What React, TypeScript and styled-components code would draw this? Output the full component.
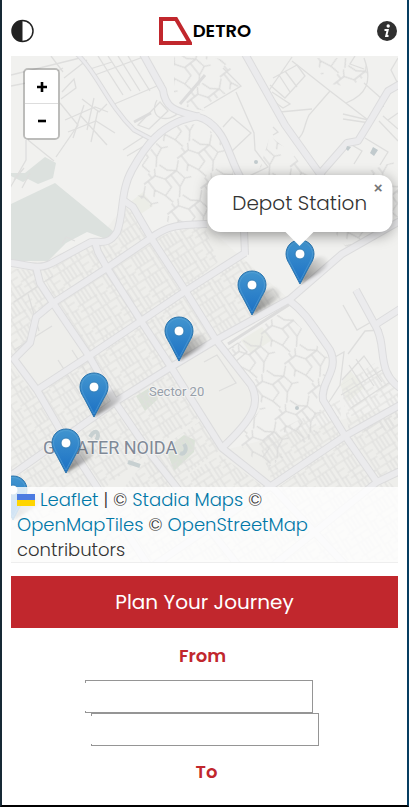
import React from "react";
import styled, { createGlobalStyle } from "styled-components";

const GlobalStyle = createGlobalStyle`
  *, *::before, *::after { box-sizing: border-box; }
  body {
    margin: 0;
    background: #fff;
    color: #333;
    font-family: Poppins, Inter, "Open Sans", sans-serif;
    font-size: 18px;
  }
`;

const Page = styled.div`
  min-height: 100vh;
  display: flex;
  flex-direction: column;
  padding: 0 9px;
  border: 2px solid #000;
  border-top: 0;
  border-left-color: #172935;
  border-right-color: #073e61;
`;

const Header = styled.header`
  display: flex;
  align-items: center;
  justify-content: space-between;
  height: 56px;
  padding-top: 6px;
`;

const IconButton = styled.button`
  display: flex;
  padding: 0;
  border: 0;
  background: none;
  cursor: pointer;
`;

const Brand = styled.a`
  display: flex;
  align-items: center;
  gap: 1px;
  color: #000;
  font-size: 18px;
  font-weight: 600;
  line-height: 28px;
  text-decoration: none;
`;

const MapArea = styled.section`
  position: relative;
  display: flex;
  flex-direction: column;
  justify-content: space-between;
  align-items: flex-start;
  height: calc(100vh - 300px);
  min-height: 360px;
  overflow: hidden;
  background: #f1f1ef;
`;

const Tiles = styled.svg`
  position: absolute;
  inset: 0;
  width: 100%;
  height: 100%;
  font-family: Roboto, sans-serif;
`;

const ZoomControl = styled.div`
  position: relative;
  display: flex;
  flex-direction: column;
  width: 37px;
  margin: 12px;
  border: 2px solid rgba(0, 0, 0, 0.22);
  border-radius: 5px;
  background-clip: padding-box;
`;

const ZoomButton = styled.button`
  display: flex;
  align-items: center;
  justify-content: center;
  height: 34px;
  padding: 0;
  border: 0;
  background: #fff;
  color: #000;
  cursor: pointer;
  &:first-child {
    border-bottom: 1px solid #ddd;
    border-radius: 3px 3px 0 0;
  }
  &:last-child { border-radius: 0 0 3px 3px; }
`;

const Pin = styled.button`
  position: absolute;
  width: 50px;
  height: 46px;
  margin: -45px 0 0 -15px;
  padding: 0;
  border: 0;
  background: none;
  cursor: pointer;
`;

const Popup = styled.div`
  position: absolute;
  left: 74.6%;
  top: 34.8%;
  width: 185px;
  height: 57px;
  padding-bottom: 2px;
  transform: translate(-50%, -100%);
  display: flex;
  align-items: center;
  justify-content: center;
  border-radius: 13px;
  background: #fff;
  box-shadow: 0 3px 14px rgba(0, 0, 0, 0.4);
  font-size: 20px;
  font-weight: 300;
  &::after {
    content: "";
    position: absolute;
    top: 100%;
    left: 50%;
    margin-left: -14px;
    border: 14px solid transparent;
    border-top-color: #fff;
    border-bottom: 0;
  }
`;

const CloseButton = styled.button`
  position: absolute;
  top: 5px;
  right: 6px;
  width: 16px;
  height: 16px;
  padding: 0;
  border: 0;
  background: none;
  color: #757575;
  font: bold 15px/16px "Liberation Sans", sans-serif;
  cursor: pointer;
`;

const Attribution = styled.footer`
  position: relative;
  width: 100%;
  padding: 0 6px;
  background: rgba(255, 255, 255, 0.8);
  border-bottom: 1px solid #eee;
  font-weight: 300;
  line-height: 25px;
  a {
    color: #0078a8;
    text-decoration: none;
  }
`;

const Flag = styled.svg`
  width: 18px;
  height: 12px;
  margin-right: 5px;
`;

const PlanBar = styled.button`
  margin-top: 13px;
  padding: 13px;
  border: 0;
  background: #c1272d;
  color: #fff;
  font-family: inherit;
  font-size: 20px;
  line-height: 26px;
  cursor: pointer;
`;

const Form = styled.form`
  display: flex;
  flex-direction: column;
  align-items: center;
  padding-top: 15px;
`;

const Label = styled.label<{ $side: "left" | "right" }>`
  padding-${(p) => p.$side}: 4px;
  color: #c1272d;
  font-weight: 600;
  line-height: 26px;
`;

const Field = styled.input<{ $shift?: boolean }>`
  width: 60%;
  max-width: 228px;
  height: 33px;
  margin-right: ${(p) => (p.$shift ? 12 : 0)}px;
  padding: 0 8px;
  border: 1px solid #959595;
  border-left: 0;
  background:
    linear-gradient(#959595, #959595) 0 0 / 1px 2px no-repeat,
    linear-gradient(#959595, #959595) 0 100% / 1px 1px no-repeat,
    #fff;
  font: inherit;
`;

const Fields = styled.div`
  display: flex;
  flex-direction: column;
  align-items: center;
  width: 100%;
  margin: 11px 0 13px;
`;

const parcels = [
  "11,268 36,271 53,303 30,322 28,345 11,358",
  "40,268 92,243 107,268 55,301",
  "56,305 107,271 140,321 91,354",
  "98,247 118,240 127,206 149,238 109,265",
  "110,268 151,241 184,289 142,317",
  "155,239 180,228 204,225 218,262 188,287",
  "143,323 185,294 214,340 173,364",
  "190,291 243,258 283,298 218,335",
  "92,358 139,324 169,367 118,399",
  "40,390 88,358 112,402 66,438",
  "11,366 34,393 62,441 11,475",
  "120,404 170,371 200,417 150,450",
  "341,385 375,363 398,391 398,430 349,432",
  "350,438 398,410 398,470 376,478",
  "258,440 340,400 342,434 272,482",
  "11,480 66,443 112,407 148,453 90,500 11,530",
  "150,455 202,420 220,450 170,486 90,530",
  "90,535 220,455 268,490 180,560 90,560",
  "180,560 342,440 398,490 398,560",
];

const oldTowns = [
  "174,56 205,56 205,111 174,104",
  "205,56 225,60 241,85 205,105",
  "171,127 203,123 229,151 236,190 204,220 170,224 135,193 144,157",
  "315,58 364,58 368,74 350,87 324,83",
  "345,180 398,160 398,217 348,250 310,200",
  "228,350 285,310 330,360 315,405 330,425 265,470 235,440 260,410",
  "270,136 294,155 312,180 256,180",
];

const minorStreets = [
  "M11 75 80 58M11 86 42 80 63 68M26 140 26 160 10 188M28 140 54 161",
  "M51 56 63 72M62 92 74 79 76 88 61 99M82 99 99 112 107 104M90 69 112 62",
  "M60 103 78 125 56 157M65 120 95 107 108 112M68 132 96 121 115 133",
  "M80 115 107 145M84 105 73 138M94 98 87 130M98 110 91 142",
  "M98 56 123 95M108 56 131 91M118 56 140 91M128 56 150 91M95 75 146 56M112 105 164 83",
  "M123 150 143 137M127 156 149 143M138 125 160 102 168 111 149 129Z",
  "M157 100C147 119 169 124 179 112M24 168 14 180M30 173 22 188",
  "M292 61 330 91 368 120M330 91 309 115C303 127 306 133 295 142M280 112 312 109",
  "M292 57 268 92 278 105M273 78 297 65 305 76 285 98 270 85M279 75 290 92M285 71 297 87",
  "M272 92 290 104 283 108 269 98M343 114 368 120 376 108 384 106M343 119 370 123",
  "M383 116 398 129M379 121 398 141M364 58C373 82 366 95 346 103M364 83 383 100",
  "M398 58 391 70 397 82M388 120 398 113M236 92 254 133 255 150 268 167 247 177",
  "M204 108 241 86 223 68M223 127 232 117 251 133 232 151M273 127 278 132 273 135",
  "M355 56 350 64 364 69M345 141 362 151 354 164M365 138 388 152 380 165",
  "M343 305 357 330 371 322 358 300M348 354 365 331 382 330M342 380 364 356 382 382",
  "M349 365 365 390M356 359 374 386M341 395 382 370M351 408 390 382",
  "M204 362 217 355 236 383 219 391M226 351 238 343 247 352 235 362Z",
  "M87 60 64 78M335 357 344 352 340 385 329 402M62 244 66 237 75 241",
  "M14 302 53 276M14 350 52 326M28 294 39 331M58 360 80 394M72 350 94 384",
];

const majorRoads = [
  "M143 54 163 90C166 114 184 111 204 119 228 132 228 158 242 180L245 255",
  "M200 116C160 121 143 150 132 170 120 191 124 215 117 232 108 247 98 240 91 242L52 263C38 271 26 264 10 263",
  "M244 52 285 125 342 205",
  "M319 175 347 143 358 141 372 118 388 91 400 84",
  "M123 200 133 207 151 238 185 290 216 340 251 385C261 403 254 418 222 448",
  "M151 238C168 225 180 225 207 224",
  "M95 242 98 252 107 268 141 321 171 367 222 448 275 490 350 570",
  "M36 267 40 283 53 303 89 356 115 402 152 456 240 568",
  "M53 303 36 317 30 343 14 359 37 390 66 440 150 568",
  "M151 238 107 268 53 303M245 253 187 290 141 321 89 356 37 390",
  "M400 221 342 254 290 299 216 340 171 367 115 402 10 476",
  "M290 301C306 313 313 326 330 350 340 370 320 382 323 400L345 436 377 482",
  "M356 290 375 325C388 346 375 370 400 388M375 325 400 309",
  "M400 405 345 436 265 490 150 568M400 471 377 482 270 568",
];

const mediumRoads = ["M77 54C97 72 107 104 134 130L153 140"];

const Basemap = () => (
  <Tiles viewBox="11 56 387 507" preserveAspectRatio="xMidYMid slice" aria-hidden="true">
    <defs>
      <pattern id="parcels" width="34" height="26" patternUnits="userSpaceOnUse" patternTransform="rotate(-33)">
        <path fill="none" stroke="#dfdfde" strokeWidth="1.2" d="M0 1H34M0 14H23M26 1V26M4 1V14M8 1V14M12 1V14M16 1V14M21 1V26M0 20H21M5 14V26M11 20V26M26 8H34M26 16H34M30 16V26" />
      </pattern>
      <pattern id="lanes" width="42" height="38" patternUnits="userSpaceOnUse" patternTransform="rotate(-38)">
        <path fill="none" stroke="#dcdcdb" strokeWidth="1.3" d="M0 6H14L18 0M5 6V17L0 22M14 6 20 15H34L42 8M20 15V25L10 28 5 17M27 15V30L20 38M34 15 36 26 27 30M10 28 12 38M36 26 42 29M24 0 27 9 34 15M10 0V6" />
      </pattern>
    </defs>
    <path d="M11 56H398V563H11Z" fill="#f1f1ef" />
    <path d="M11 268 95 243 125 205 155 237 205 225 290 300 216 340 255 400 225 450 398 405V563H11Z" fill="#eeeeeb" />
    <path d="M11 173 25 173 45 157 56 163 53 178 38 184 28 179 23 182 11 176ZM11 204 55 183 88 210 114 232 106 239 87 232 66 243 48 261 11 261Z" fill="#dce1de" />
    <path d="M136 396 154 385 158 399 145 411ZM166 449 184 435 195 440 194 452 174 471Z" fill="#dbe2d8" />
    <path d="M241 340 262 327 272 340 251 354ZM128 204 143 192 153 206 139 215ZM340 385 350 370 364 388 348 402Z" fill="#ecede7" />
    <g fill="none" stroke="#dededd" strokeWidth="1.3">
      {parcels.map((points) => (
        <polygon key={points} points={points} fill="url(#parcels)" stroke="none" />
      ))}
      {oldTowns.map((points) => (
        <polygon key={points} points={points} fill="url(#lanes)" stroke="none" />
      ))}
      {minorStreets.map((d) => (
        <path key={d} d={d} />
      ))}
    </g>
    <path d="M228 344 290 304M134 122 151 113M180 104 205 75" stroke="#dcdcdc" strokeWidth="3" />
    <g fill="none" stroke="#dcdcdd" strokeLinejoin="round">
      {mediumRoads.map((d) => <path key={d} d={d} strokeWidth="5" />)}
      {majorRoads.map((d) => <path key={d} d={d} strokeWidth="8" />)}
    </g>
    <g fill="none" stroke="#ebebed" strokeLinejoin="round">
      {mediumRoads.map((d) => <path key={d} d={d} strokeWidth="3" />)}
      {majorRoads.map((d) => <path key={d} d={d} strokeWidth="6" />)}
    </g>
    <g fill="#c1cacd">
      <path d="M373 147 378 150 374 156 370 153ZM347 146 351 147 348 151 346 149Z" />
      <circle cx="256" cy="162" r="2" />
      <circle cx="297" cy="408" r="2" />
    </g>
    <path d="M90 437C96 426 101 435 96 440M128 462 140 466M184 444C188 450 184 455 180 453" fill="none" stroke="#c7d0d1" strokeWidth="4" />
    <g stroke="#f3f3f2" strokeWidth="2" paintOrder="stroke" strokeLinejoin="round">
      <text x="149" y="396" fontSize="13" fill="#97a0aa">Sector 20</text>
      <text x="43" y="454" fontSize="18" fill="#7f8997">GREATER NOIDA</text>
    </g>
  </Tiles>
);

const stations = [
  { name: "Depot Station", left: 74.7, top: 45 },
  { name: "Station 2", left: 62.2, top: 51 },
  { name: "Station 3", left: 43.3, top: 60.2 },
  { name: "Station 4", left: 21.5, top: 71.2 },
  { name: "Station 5", left: 14.2, top: 82.2 },
  { name: "Station 6", left: 0.4, top: 91.5 },
];

const PinIcon = () => (
  <svg width="50" height="46" viewBox="0 0 50 46" aria-hidden="true">
    <defs>
      <linearGradient id="pinFill" x1="0" y1="0" x2="0" y2="1">
        <stop offset="0" stopColor="#4295cf" />
        <stop offset="1" stopColor="#1b70c4" />
      </linearGradient>
      <linearGradient id="pinShade" x1="0" y1="1" x2="1" y2="0">
        <stop offset="0" stopColor="#000" stopOpacity=".5" />
        <stop offset="1" stopColor="#000" stopOpacity="0" />
      </linearGradient>
      <filter id="pinBlur"><feGaussianBlur stdDeviation="1.5" /></filter>
    </defs>
    <path d="M15 45 22 27C29 15 44 15 43 24 42 31 30 36 15 45Z" fill="url(#pinShade)" filter="url(#pinBlur)" />
    <path d="M15 1C7 1 1 7 1 15 1 19 3 23 5 26L15 45 25 26C27 23 29 19 29 15 29 7 23 1 15 1Z" fill="url(#pinFill)" stroke="#2e76ad" />
    <path d="M15 2.5C8 2.5 2.5 8 2.5 15 2.5 19 5 23 6 25L15 42 24 25C25 23 27.5 19 27.5 15 27.5 8 22 2.5 15 2.5Z" fill="none" stroke="#64abda" strokeOpacity=".45" />
    <circle cx="15" cy="15" r="5" fill="#fff" stroke="#347fb7" />
  </svg>
);

export default function App() {
  return (
    <>
      <GlobalStyle />
      <Page>
        <Header>
          <IconButton aria-label="Toggle contrast">
            <svg width="23" height="24" viewBox="0 0 23 24">
              <circle cx="11.5" cy="12" r="10.5" fill="#fff" stroke="#222" strokeWidth="1.5" />
              <path d="M11.5 1.5A10.5 10.5 0 0 0 11.5 22.5Z" fill="#222" />
            </svg>
          </IconButton>
          <Brand href="#">
            <svg width="33" height="28" viewBox="0 0 33 28" aria-hidden="true">
              <path d="M2 2H17L31 26H2Z" fill="none" stroke="#c1272d" strokeWidth="4" />
            </svg>
            DETRO
          </Brand>
          <IconButton aria-label="Information">
            <svg width="22" height="22" viewBox="0 0 22 22">
              <circle cx="11" cy="11" r="10" fill="#303030" />
              <circle cx="12.2" cy="6" r="1.7" fill="#fff" />
              <path d="M8.5 10H11.7L10.2 16H12.5" fill="none" stroke="#fff" strokeWidth="2" />
            </svg>
          </IconButton>
        </Header>

        <MapArea aria-label="Station map">
          <Basemap />
          {stations.map((s) => (
            <Pin key={s.name} aria-label={s.name} style={{ left: `${s.left}%`, top: `${s.top}%` }}>
              <PinIcon />
            </Pin>
          ))}
          <ZoomControl>
            <ZoomButton aria-label="Zoom in">
              <svg width="10" height="10" viewBox="0 0 10 10">
                <path d="M0 5H10M5 0V10" stroke="#000" strokeWidth="2.6" />
              </svg>
            </ZoomButton>
            <ZoomButton aria-label="Zoom out">
              <svg width="10" height="10" viewBox="0 0 10 10">
                <path d="M1 5H9" stroke="#000" strokeWidth="2.6" />
              </svg>
            </ZoomButton>
          </ZoomControl>
          <Attribution>
            <Flag viewBox="0 0 18 12" aria-hidden="true">
              <path d="M0 0H18V6H0Z" fill="#4c7be1" />
              <path d="M0 6H18V12H0Z" fill="#ffd500" />
            </Flag>
            <a href="#leaflet">Leaflet</a> | © <a href="#stadia">Stadia Maps</a> ©{" "}
            <a href="#openmaptiles">OpenMapTiles</a> © <a href="#osm">OpenStreetMap</a> contributors
          </Attribution>
          <Popup>
            Depot Station
            <CloseButton aria-label="Close popup">×</CloseButton>
          </Popup>
        </MapArea>

        <PlanBar>Plan Your Journey</PlanBar>
        <Form>
          <Label htmlFor="from" $side="right">From</Label>
          <Fields>
            <Field id="from" $shift />
            <Field id="to" />
          </Fields>
          <Label htmlFor="to" $side="left">To</Label>
        </Form>
      </Page>
    </>
  );
}
